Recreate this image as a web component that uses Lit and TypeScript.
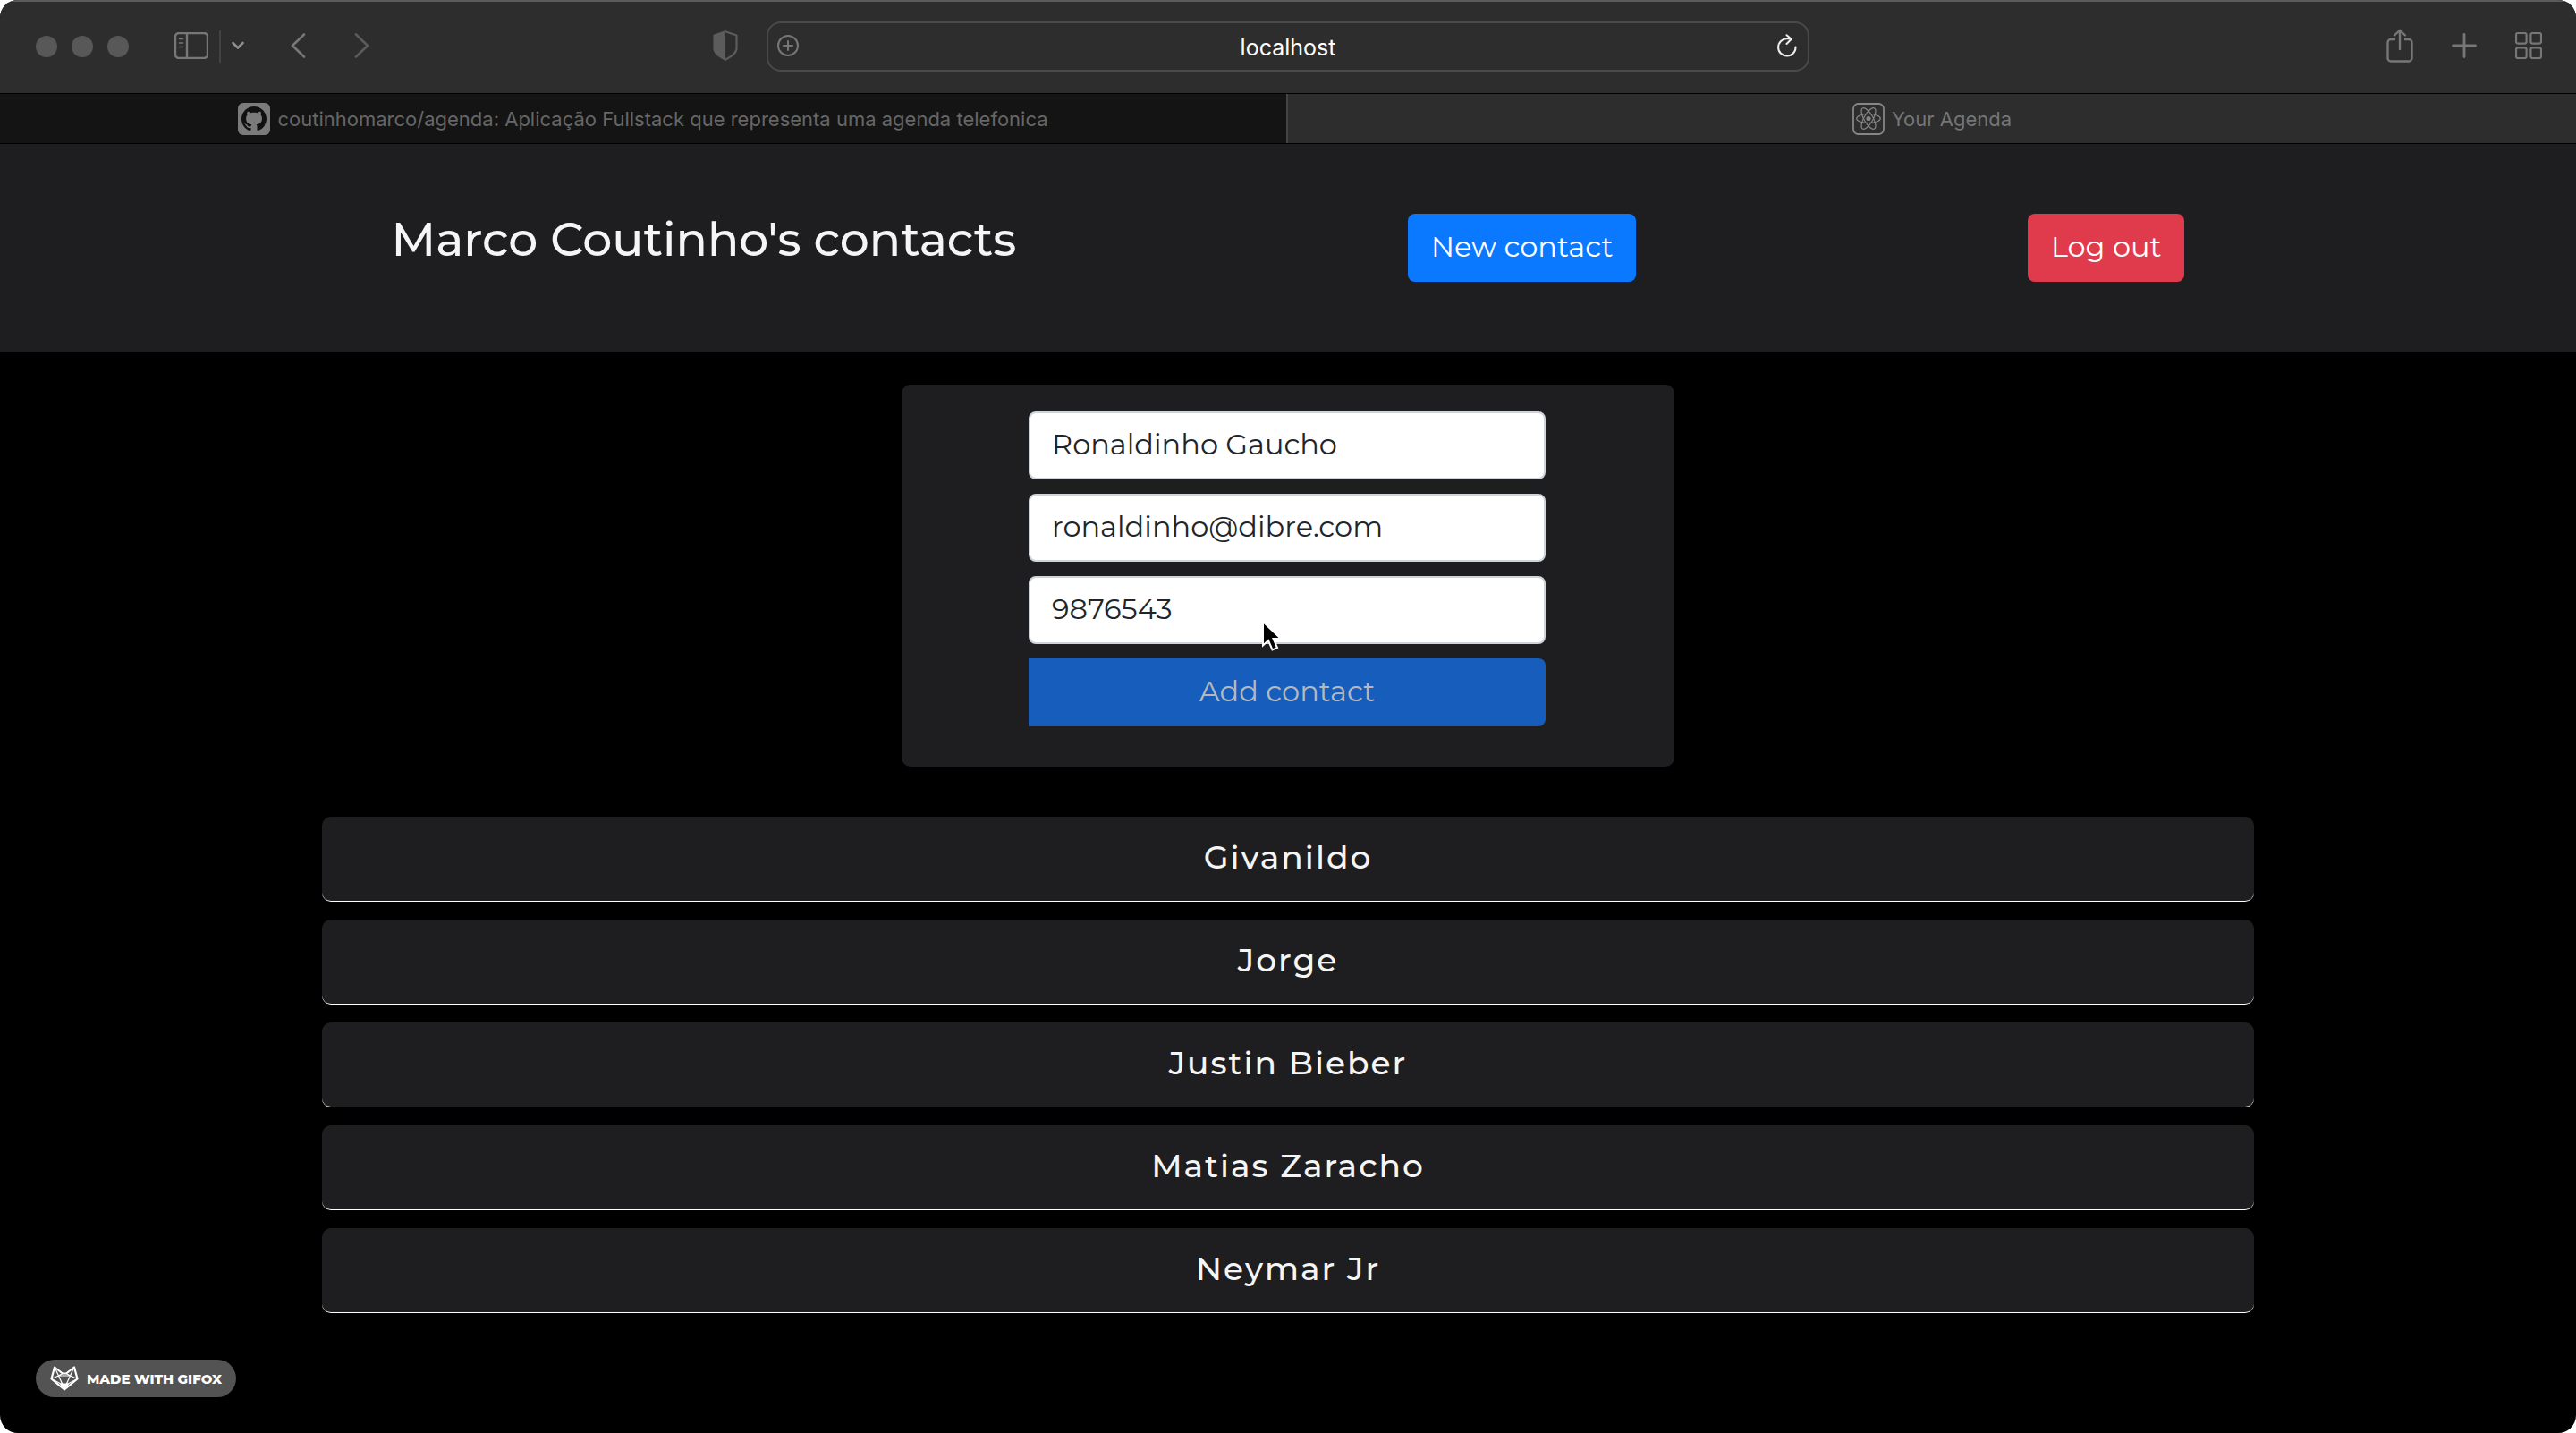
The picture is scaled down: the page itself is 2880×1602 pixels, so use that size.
import { LitElement, html, css, svg } from "lit";
import { customElement, state } from "lit/decorators.js";

interface Field {
  id: string;
  label: string;
  type: string;
  value: string;
}

const sidebarIcon = html`<svg class="icon" width="38" height="30" viewBox="0 0 38 30" aria-hidden="true">
  <rect x="1" y="1" width="36" height="28" rx="4" stroke-width="2.4" />
  <path d="M14 1v28" stroke-width="2.4" />
  <path d="M5.5 7.5h4M5.5 12h4M5.5 16.5h4" stroke-width="1.6" stroke-linecap="round" />
</svg>`;

const chevronDown = html`<svg class="icon bright" width="14" height="10" viewBox="0 0 14 10" aria-hidden="true">
  <path d="M1.5 2 7 7.5 12.5 2" stroke-width="2.6" stroke-linecap="round" stroke-linejoin="round" />
</svg>`;

const backIcon = html`<svg class="icon" width="17" height="28" viewBox="0 0 17 28" aria-hidden="true">
  <path d="M15 1.5 2 14l13 12.5" stroke-width="2.6" stroke-linecap="round" stroke-linejoin="round" />
</svg>`;

const forwardIcon = html`<svg class="icon dim" width="17" height="28" viewBox="0 0 17 28" aria-hidden="true">
  <path d="M2 1.5 15 14 2 26.5" stroke-width="2.6" stroke-linecap="round" stroke-linejoin="round" />
</svg>`;

const shieldIcon = html`<svg class="icon dim" width="28" height="34" viewBox="0 0 28 34" aria-hidden="true">
  <path d="M14 1.2 26.5 5.5V20c0 5.5-5.5 9-12.5 12.8C7 29 1.5 25.5 1.5 20V5.5Z" stroke-width="2.2" stroke-linejoin="round" />
  <path class="solid" d="M14 1.2V32.8C7 29 1.5 25.5 1.5 20V5.5Z" />
</svg>`;

const addIcon = html`<svg class="icon" width="24" height="24" viewBox="0 0 24 24" aria-hidden="true">
  <circle cx="12" cy="12" r="11" stroke-width="2" />
  <path d="M12 7v10M7 12h10" stroke-width="2" stroke-linecap="round" />
</svg>`;

const reloadIcon = html`<svg class="icon white" width="22" height="26" viewBox="0 0 22 26" aria-hidden="true">
  <path d="M20.5 14.5A9.7 9.7 0 1 1 11 5.2q2.5-.1 4.5.4" stroke-width="2" stroke-linecap="round" />
  <path d="M10.5 1.2 15.8 5.8 10.5 11" stroke-width="2" stroke-linecap="round" stroke-linejoin="round" />
</svg>`;

const shareIcon = html`<svg class="icon" width="30" height="38" viewBox="0 0 30 38" aria-hidden="true">
  <path d="M10 12H5a3.5 3.5 0 0 0-3.5 3.5V33A3.5 3.5 0 0 0 5 36.5h20a3.5 3.5 0 0 0 3.5-3.5V15.5A3.5 3.5 0 0 0 25 12h-5" stroke-width="2.4" />
  <path d="M15 23V2M9 7.5 15 1.8 21 7.5" stroke-width="2.4" stroke-linecap="round" stroke-linejoin="round" />
</svg>`;

const plusIcon = html`<svg class="icon" width="28" height="28" viewBox="0 0 28 28" aria-hidden="true">
  <path d="M14 1.5v25M1.5 14h25" stroke-width="2.8" stroke-linecap="round" />
</svg>`;

const gridIcon = html`<svg class="icon" width="30" height="30" viewBox="0 0 30 30" aria-hidden="true">
  ${[1, 17.4].map((x) => [1, 17.4].map((y) => svg`<rect x=${x} y=${y} width="11.6" height="11.6" rx="2" stroke-width="2.2" />`))}
</svg>`;

const githubIcon = html`<svg width="36" height="36" viewBox="0 0 36 36" aria-hidden="true">
  <rect width="36" height="36" rx="6" fill="#7b7b7b" />
  <path
    transform="translate(4 4) scale(1.75)"
    fill="#111111"
    d="M8 0C3.58 0 0 3.58 0 8c0 3.54 2.29 6.53 5.47 7.59.4.07.55-.17.55-.38 0-.19-.01-.82-.01-1.49-2.01.37-2.53-.49-2.69-.94-.09-.23-.48-.94-.82-1.13-.28-.15-.68-.52-.01-.53.63-.01 1.08.58 1.23.82.72 1.21 1.87.87 2.33.66.07-.52.28-.87.51-1.07-1.78-.2-3.64-.89-3.64-3.95 0-.87.31-1.59.82-2.15-.08-.2-.36-1.02.08-2.12 0 0 .67-.21 2.2.82.64-.18 1.32-.27 2-.27s1.36.09 2 .27c1.53-1.04 2.2-.82 2.2-.82.44 1.1.16 1.92.08 2.12.51.56.82 1.27.82 2.15 0 3.07-1.87 3.75-3.65 3.95.29.25.54.73.54 1.48 0 1.07-.01 1.93-.01 2.2 0 .21.15.46.55.38A8.01 8.01 0 0 0 16 8c0-4.42-3.58-8-8-8Z"
  />
</svg>`;

const reactIcon = html`<svg width="36" height="36" viewBox="0 0 36 36" fill="none" stroke="#868686" aria-hidden="true">
  <rect x="1" y="1" width="34" height="34" rx="5.5" stroke-width="1.8" />
  <circle cx="18" cy="17.5" r="2.6" fill="#868686" stroke="none" />
  ${[0, 60, 120].map((a) => svg`<ellipse cx="18" cy="17.5" rx="13.3" ry="5" stroke-width="1.2" transform="rotate(${a} 18 17.5)" />`)}
</svg>`;

const foxIcon = html`<svg width="32" height="28" viewBox="0 0 32 28" fill="none" stroke="#ffffff" stroke-linejoin="round" aria-hidden="true">
  <path d="M5 1.5 14 8.5h4L27 1.5 30.5 14.5 16 26.5 1.5 14.5Z" stroke-width="2.2" />
  <path d="M5 1.5 9.5 11 1.5 14.5M27 1.5 22.5 11 30.5 14.5M9.5 11h13M9.5 11 14 21M22.5 11 18 21M9.5 11 14 8.5M22.5 11 18 8.5M1.5 14.5 14 21M30.5 14.5 18 21" stroke-width="1.2" />
  <path d="M11.5 20h9L16 26.5Z" fill="#ffffff" stroke-width="1" />
</svg>`;

const pointerIcon = html`<svg class="pointer" width="26" height="38" viewBox="0 0 26 38" aria-hidden="true">
  <path d="M2 2v26.5l6-5.5 4.5 10.5 5.5-2.4L13.5 21H22Z" fill="#000000" stroke="#ffffff" stroke-width="2" stroke-linejoin="miter" />
</svg>`;

@customElement("app-root")
export class AppRoot extends LitElement {
  static styles = css`
    :host {
      display: block;
      background: #ffffff;
      font-family: Montserrat, Inter, sans-serif;
    }
    *,
    *::before {
      box-sizing: border-box;
    }
    button,
    input {
      font: inherit;
      margin: 0;
    }
    .window {
      position: relative;
      min-height: 100vh;
      border-radius: 20px;
      overflow: hidden;
      background: #000000;
    }
    .toolbar {
      display: grid;
      grid-template-columns: 1fr 1166px 1fr;
      align-items: center;
      height: 104px;
      padding-bottom: 2px;
      background: #2d2d2d;
      border-top: 2px solid #5c5c5c;
      font-family: Inter, sans-serif;
    }
    .tool {
      display: flex;
      padding: 0 0 2px;
      border: 0;
      background: none;
    }
    .icon {
      display: block;
      fill: none;
      stroke: #777777;
    }
    .bright {
      stroke: #909090;
    }
    .dim {
      stroke: #5c5c5c;
    }
    .white {
      stroke: #eeeeee;
    }
    .solid {
      fill: #5c5c5c;
      stroke: none;
    }
    .left {
      display: flex;
      align-items: center;
      padding: 0 32px 0 40px;
    }
    .lights {
      display: flex;
      gap: 16px;
      margin-right: 51px;
    }
    .light {
      width: 24px;
      height: 24px;
      border-radius: 50%;
      background: #585858;
    }
    .rule {
      width: 2px;
      height: 36px;
      margin: 0 12px;
      background: #424242;
    }
    .history {
      display: flex;
      gap: 54px;
      margin-left: 52px;
    }
    .shield {
      margin-left: auto;
    }
    .address {
      display: flex;
      align-items: center;
      justify-content: space-between;
      height: 56px;
      padding: 0 12px 0 10px;
      border: 2px solid #4a4a4a;
      border-radius: 16px;
      color: #ffffff;
      font-size: 25px;
      line-height: 32px;
    }
    .host {
      padding-top: 2px;
    }
    .right {
      display: flex;
      align-items: center;
      justify-content: flex-end;
      gap: 43px;
      padding-right: 38px;
    }
    .tabs {
      display: grid;
      grid-template-columns: 1fr 1fr;
      height: 57px;
      border-top: 1px solid #000000;
      border-bottom: 1px solid #000000;
      font-family: Inter, sans-serif;
      font-size: 22px;
      background: #2d2d2d;
    }
    .tab {
      display: flex;
      align-items: center;
      justify-content: center;
      gap: 8px;
      color: #757575;
      text-decoration: none;
    }
    .behind {
      background: #141414;
      border-right: 2px solid #444444;
      color: #666666;
    }
    .header {
      display: flex;
      justify-content: space-evenly;
      align-items: center;
      min-height: 233px;
      padding-bottom: 2px;
      background: #1e1e20;
      color: #f5f5f5;
    }
    .title {
      margin: 0 0 18px;
      font-size: 52px;
      line-height: 64px;
      font-weight: 500;
    }
    .button {
      height: 76px;
      padding: 0 26px 2px;
      border: 0;
      border-radius: 8px;
      color: #ffffff;
      font-size: 32px;
      font-weight: 400;
    }
    .primary {
      background: #0b79ff;
    }
    .danger {
      background: #e03b4d;
    }
    .content {
      display: flex;
      flex-direction: column;
      align-items: center;
      gap: 56px;
      padding: 36px 12.5% 134px;
    }
    .form {
      position: relative;
      display: flex;
      flex-direction: column;
      gap: 16px;
      width: 40%;
      padding: 30px 144px 45px 142px;
      border-radius: 10px;
      background: #1e1e20;
    }
    .input {
      width: 100%;
      height: 76px;
      padding: 0 24px 3px;
      border: 2px solid #ced4da;
      border-radius: 8px;
      outline: 0;
      background: #ffffff;
      color: #212529;
      font-size: 32px;
      font-weight: 400;
    }
    .submit {
      padding-bottom: 3px;
      border-radius: 0 8px 8px 0;
      background: #165dbc;
      color: #b5b9bf;
    }
    .pointer {
      position: absolute;
      left: 402px;
      top: 263px;
    }
    .contacts {
      display: flex;
      flex-direction: column;
      gap: 20px;
      width: 100%;
      margin: 0;
      padding: 0;
      list-style: none;
    }
    .contact {
      display: block;
      width: 100%;
      height: 95px;
      padding: 0 0 4px;
      border: 0;
      border-bottom: 1px solid #ffffff;
      border-radius: 10px;
      background: #1e1e20;
      color: #f5f5f5;
      font-size: 36px;
      font-weight: 500;
      letter-spacing: 2px;
    }
    .badge {
      position: absolute;
      left: 40px;
      bottom: 40px;
      display: flex;
      align-items: center;
      gap: 9px;
      height: 42px;
      padding: 0 16px;
      border-radius: 21px;
      background: #535353;
      color: #ffffff;
      font-size: 15px;
      font-weight: 800;
      text-decoration: none;
      white-space: nowrap;
    }
  `;

  @state() private fields: Field[] = [
    { id: "name", label: "Name", type: "text", value: "Ronaldinho Gaucho" },
    { id: "email", label: "Email", type: "email", value: "ronaldinho@dibre.com" },
    { id: "phone", label: "Phone", type: "tel", value: "9876543" },
  ];

  @state() private contacts = ["Givanildo", "Jorge", "Justin Bieber", "Matias Zaracho", "Neymar Jr"];

  private tool(label: string, icon: unknown, extra = "") {
    return html`<button class="tool ${extra}" type="button" aria-label=${label}>${icon}</button>`;
  }

  render() {
    return html`
      <div class="window">
        <div class="toolbar">
          <div class="left">
            <div class="lights"><span class="light"></span><span class="light"></span><span class="light"></span></div>
            ${this.tool("Sidebar", sidebarIcon)}
            <span class="rule"></span>
            ${this.tool("Tab groups", chevronDown)}
            <div class="history">${this.tool("Back", backIcon)}${this.tool("Forward", forwardIcon)}</div>
            ${this.tool("Privacy report", shieldIcon, "shield")}
          </div>
          <div class="address">
            ${this.tool("Add bookmark", addIcon)}
            <span class="host">localhost</span>
            ${this.tool("Reload", reloadIcon)}
          </div>
          <div class="right">
            ${this.tool("Share", shareIcon)}${this.tool("New tab", plusIcon)}${this.tool("Tab overview", gridIcon)}
          </div>
        </div>
        <nav class="tabs">
          <a class="tab behind" href="#agenda">${githubIcon}<span>coutinhomarco/agenda: Aplicação Fullstack que representa uma agenda telefonica</span></a>
          <a class="tab" href="#home">${reactIcon}<span>Your Agenda</span></a>
        </nav>
        <header class="header">
          <h1 class="title">Marco Coutinho's contacts</h1>
          <button class="button primary" type="button">New contact</button>
          <button class="button danger" type="button">Log out</button>
        </header>
        <main class="content">
          <form class="form" @submit=${(e: Event) => e.preventDefault()}>
            ${this.fields.map(
              (f) => html`<input class="input" id=${f.id} type=${f.type} aria-label=${f.label} .value=${f.value} />`
            )}
            <button class="button submit" type="submit">Add contact</button>
            ${pointerIcon}
          </form>
          <ul class="contacts">
            ${this.contacts.map((name) => html`<li><button class="contact" type="button">${name}</button></li>`)}
          </ul>
        </main>
        <a class="badge" href="#gifox">${foxIcon}<span>MADE WITH GIFOX</span></a>
      </div>
    `;
  }
}
